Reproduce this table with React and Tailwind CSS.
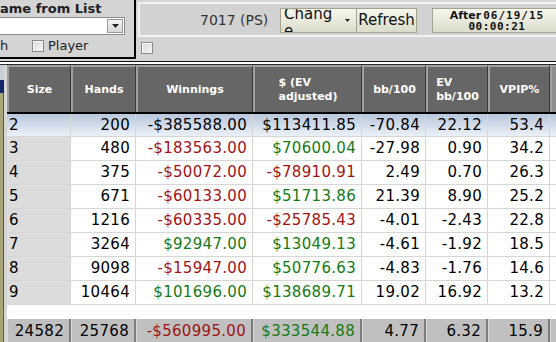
import React from "react";

const RED = "text-[#a01414]";
const GREEN = "text-[#167a16]";

const rows = [
  ["3", "480", ["-$183563.00", RED], ["$70600.04", GREEN], "-27.98", "0.90", "34.2"],
  ["4", "375", ["-$50072.00", RED], ["-$78910.91", RED], "2.49", "0.70", "26.3"],
  ["5", "671", ["-$60133.00", RED], ["$51713.86", GREEN], "21.39", "8.90", "25.2"],
  ["6", "1216", ["-$60335.00", RED], ["-$25785.43", RED], "-4.01", "-2.43", "22.8"],
  ["7", "3264", ["$92947.00", GREEN], ["$13049.13", GREEN], "-4.61", "-1.92", "18.5"],
  ["8", "9098", ["-$15947.00", RED], ["$50776.63", GREEN], "-4.83", "-1.76", "14.6"],
  ["9", "10464", ["$101696.00", GREEN], ["$138689.71", GREEN], "19.02", "16.92", "13.2"],
];

const GRID = "grid grid-cols-[64px_65px_117px_109px_64px_62px_62px_60px]";

function Checkbox() {
  return (
    <div className="w-[12px] h-[12px] border border-[#8a8a8a] bg-gradient-to-br from-[#d6d6d6] to-[#f8f8f8] shadow-[inset_1px_1px_0_#ffffff]" />
  );
}

function Cell({ children, color = "text-black", first = false }) {
  return (
    <div
      className={`h-full flex items-center border-r border-b border-[#d6d6d6] ${
        first ? "justify-start pl-[2px] bg-[#dcdcdc]" : "justify-end pr-[5px] bg-white"
      } ${color}`}
    >
      {children}
    </div>
  );
}

export default function App() {
  return (
    <div className="w-[556px] h-[342px] overflow-hidden bg-[#d4d4d4] flex flex-col font-['DejaVu_Sans',sans-serif]">
      {/* top area */}
      <div className="h-[59px] flex shrink-0">
        <div className="w-[136px] shrink-0 border-r-2 border-b-2 border-black flex flex-col">
          <div className="h-[17px] pt-[1px] text-[13px] leading-[16px] font-bold text-[#1e1e1e] whitespace-nowrap">
            ame from List
          </div>
          <div className="h-[18px] w-[125px] bg-white border-t border-r border-b border-[#8c8c8c] flex items-center justify-end pr-[1px]">
            <div className="w-[16px] h-[14px] border border-[#9a9a9a] bg-gradient-to-b from-[#f4f4f4] to-[#d8d8d8] flex items-center justify-center">
              <svg width="7" height="4" viewBox="0 0 7 4">
                <path d="M0 0 H7 L3.5 4 Z" fill="#222" />
              </svg>
            </div>
          </div>
          <div className="mt-[3px] h-[15px] flex items-center text-[13px] text-[#1e1e1e]">
            <span className="w-[32px]">h</span>
            <Checkbox />
            <span className="ml-[4px]">Player</span>
          </div>
        </div>
        <div className="flex-1 flex flex-col pl-[2px]">
          <div className="mt-[2px] h-[35px] border-l-2 border-t-2 border-b-2 border-[#f2f2f2] flex items-start pt-[4px] bg-[#d2d2d2]">
            <div className="pl-[60px] h-[25px] flex items-center text-[14px] text-[#333] whitespace-nowrap w-[140px]">
              7017 (PS)
            </div>
            <div className="h-[25px] w-[77px] border border-[#a5a58f] bg-gradient-to-b from-[#f6f6ee] to-[#dcdccb] relative overflow-hidden">
              <div className="pl-[3px] -mt-[3px] text-[15px] leading-[17px] text-[#111]">
                Chang
                <br />e
              </div>
              <svg className="absolute left-[64px] top-[10px]" width="5" height="3" viewBox="0 0 5 3">
                <path d="M0 0 H5 L2.5 3 Z" fill="#222" />
              </svg>
            </div>
            <div className="h-[25px] w-[60px] border border-l-0 border-[#a5a58f] bg-gradient-to-b from-[#f6f6ee] to-[#dcdccb] flex items-center justify-center text-[15px] text-[#111]">
              Refresh
            </div>
            <div className="ml-[15px] h-[25px] w-[130px] shrink-0 border border-[#a5a58f] bg-gradient-to-b from-[#f6f6ee] to-[#dcdccb] flex flex-col items-center justify-center text-[11px] leading-[11px] font-bold text-[#111] whitespace-nowrap">
              <div className="flex">
                <span>After</span>
                <span className="ml-[2px] tracking-[1px] font-['DejaVu_Sans_Mono',monospace]">06/19/15</span>
              </div>
              <div className="tracking-[0.5px] font-['DejaVu_Sans_Mono',monospace]">00:00:21</div>
            </div>
          </div>
          <div className="ml-[3px] mt-[5px]">
            <Checkbox />
          </div>
        </div>
      </div>
      {/* separator lines */}
      <div className="h-[2px] shrink-0" />
      <div className="h-[1px] bg-[#111] shrink-0" />
      <div className="h-[2px] bg-white shrink-0" />
      <div className="h-[1px] bg-[#2a2a2a] shrink-0" />

      {/* table area */}
      <div className="flex-1 flex min-h-0">
        <div className="w-[7px] shrink-0 flex">
          <div className="w-[4px] flex flex-col">
            <div className="h-[15px] bg-[#c9cfd8]" />
            <div className="h-[13px] bg-[#14286c]" />
            <div className="flex-1 bg-[#aba67a] border-r border-[#5a5838]" />
          </div>
          <div className="w-[3px] bg-[#d6d6d6]" />
        </div>
        <div className="flex-1 overflow-hidden flex flex-col bg-white">
          {/* header */}
          <div className={`${GRID} h-[49px] shrink-0 border-b-2 border-black text-white font-bold text-[11px] leading-[14px]`}>
            {[
              "Size",
              "Hands",
              "Winnings",
              <span className="inline-block text-left">
                $ (EV
                <br />
                adjusted)
              </span>,
              "bb/100",
              <span className="inline-block text-left">
                EV
                <br />
                bb/100
              </span>,
              "VPIP%",
              "",
            ].map((h, i) => (
              <div
                key={i}
                className={`flex items-center justify-center border-t-2 border-l-2 border-t-[#a0a0a0] border-l-[#a0a0a0] border-r border-r-[#383838] ${
                  i === 7 ? "bg-[#8e8e8e]" : "bg-[#666666]"
                }`}
              >
                {h}
              </div>
            ))}
          </div>
          {/* body */}
          <div className="text-[15px] tracking-[0.3px] leading-none">
            <div className={`${GRID} h-[23px] bg-gradient-to-b from-[#b8c7dc] to-[#eef3f9]`}>
              {["2", "200", "-$385588.00", "$113411.85", "-70.84", "22.12", "53.4", ""].map((v, i) => (
                <div
                  key={i}
                  className={`h-full flex items-center border-r border-b border-[#d6d6d6] text-black ${
                    i === 0 ? "justify-start pl-[2px]" : "justify-end pr-[5px]"
                  }`}
                >
                  {v}
                </div>
              ))}
            </div>
            {rows.map((r) => (
              <div key={r[0]} className={`${GRID} h-[24px]`}>
                {r.map((c, i) =>
                  Array.isArray(c) ? (
                    <Cell key={i} color={c[1]}>
                      {c[0]}
                    </Cell>
                  ) : (
                    <Cell key={i} first={i === 0}>
                      {c}
                    </Cell>
                  )
                )}
                <Cell />
              </div>
            ))}
            <div className="h-[14px]" />
            <div className={`${GRID} h-[24px] bg-[#c0c0c0]`}>
              {[
                ["24582", "text-black"],
                ["25768", "text-black"],
                ["-$560995.00", RED],
                ["$333544.88", GREEN],
                ["4.77", "text-black"],
                ["6.32", "text-black"],
                ["15.9", "text-black"],
                ["", "text-black"],
              ].map(([v, c], i) => (
                <div
                  key={i}
                  className={`h-full flex items-center justify-end pr-[5px] border-l border-l-[#dadada] border-r-2 border-r-[#7c7c7c] ${c}`}
                >
                  {v}
                </div>
              ))}
            </div>
          </div>
        </div>
      </div>
    </div>
  );
}
